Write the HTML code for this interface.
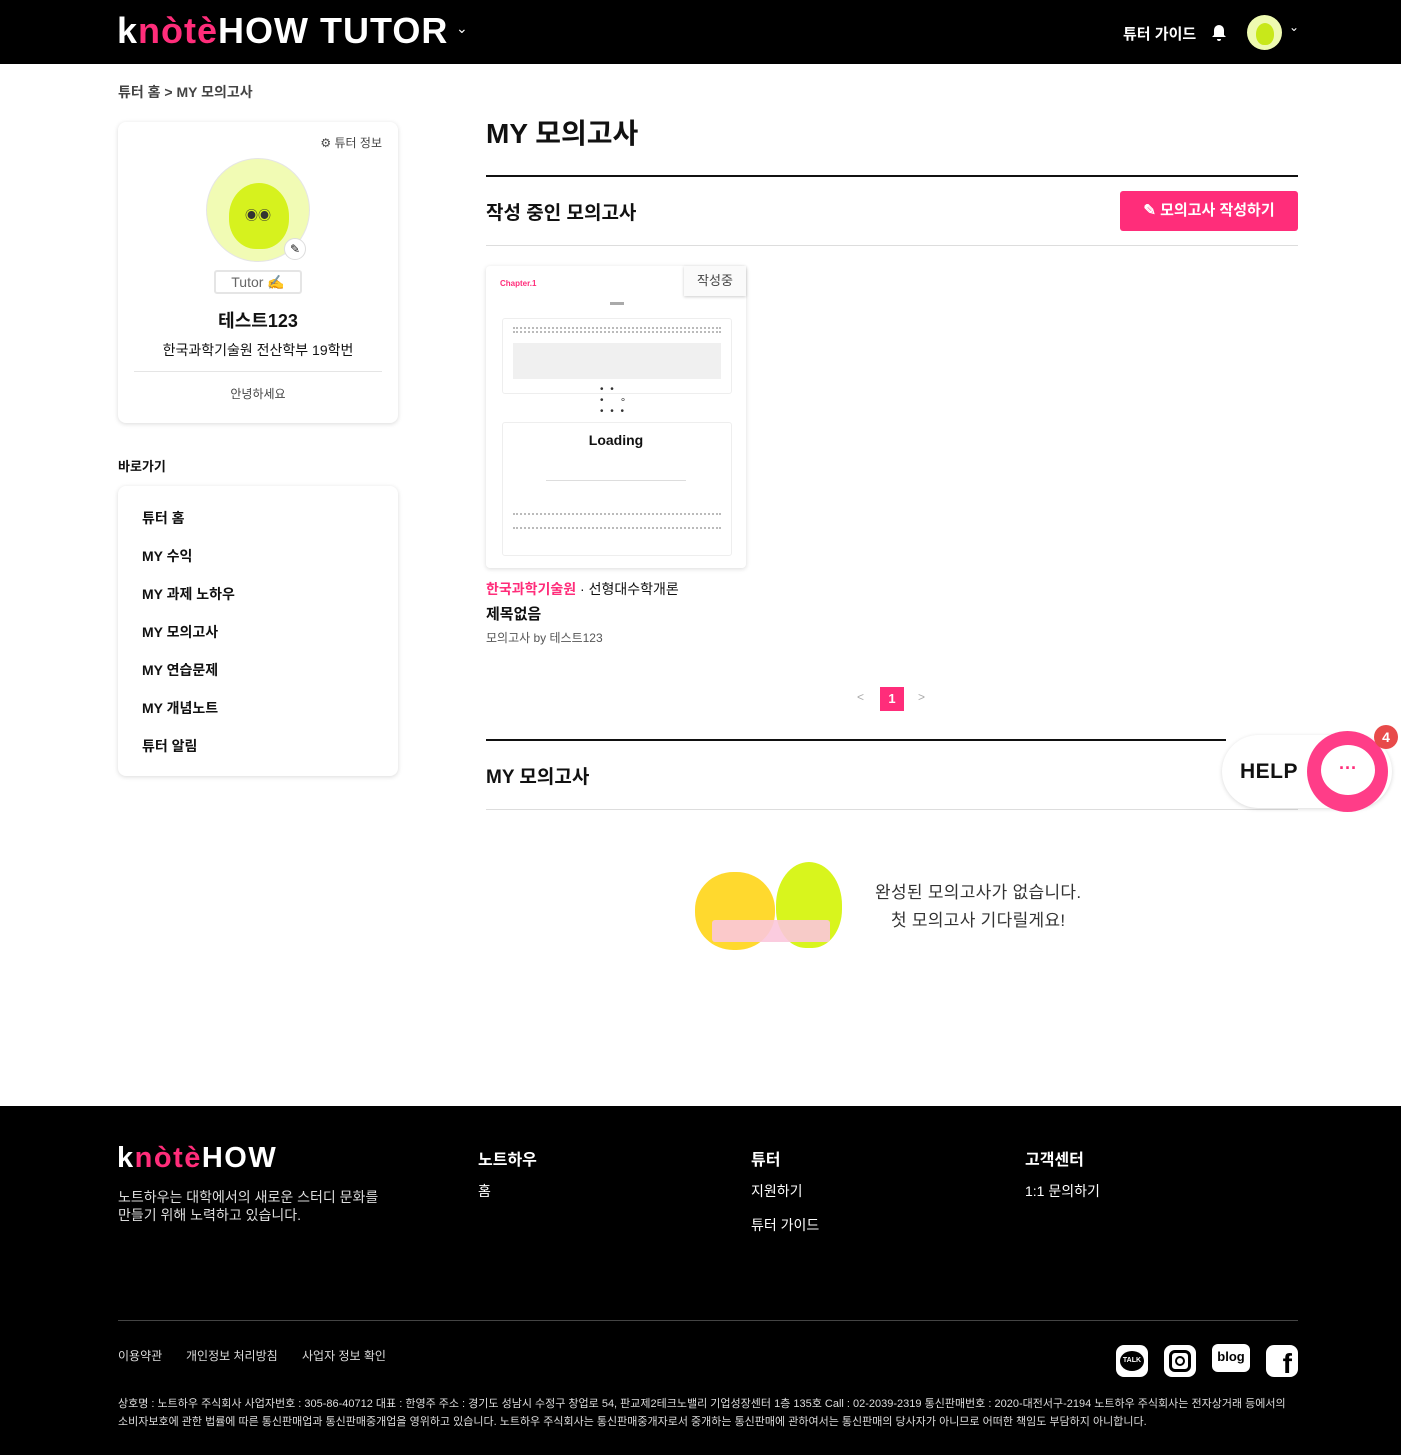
<!DOCTYPE html>
<html><head><meta charset="utf-8">
<style>
*{box-sizing:border-box;margin:0;padding:0}
body{width:1401px;height:1455px;background:#fff;font-family:"Liberation Sans","Noto Sans CJK KR",sans-serif;color:#111;position:relative;overflow:hidden}
.abs{position:absolute}
.hdr{position:absolute;left:0;top:0;width:1401px;height:64px;background:#000}
.logo{font-weight:bold;font-size:36px;letter-spacing:1px;color:#fff}
.pk{color:#ff2d7a}
.card{position:absolute;background:#fff;border-radius:8px;box-shadow:0 1px 5px rgba(0,0,0,.15)}
.b{font-weight:bold}
.nav div{position:absolute;left:24px;font-size:14px;font-weight:bold}
.foot{position:absolute;left:0;top:1106px;width:1401px;height:349px;background:#000;color:#fff}
</style></head><body>
<div class="hdr">
 <div class="abs logo" style="left:117px;top:10px">k<span class="pk">nòtè</span>HOW TUTOR</div>
 <div class="abs" style="left:456px;top:20px;color:#fff;font-size:14px">⌄</div>
 <div class="abs b" style="left:1123px;top:23px;color:#fff;font-size:15px">튜터 가이드</div>
 <svg class="abs" style="left:1209px;top:23px" width="20" height="20" viewBox="0 0 20 20"><path d="M10 2a5 5 0 0 0-5 5v5l-2 2h14l-2-2V7a5 5 0 0 0-5-5zM8 16a2 2 0 0 0 4 0z" fill="#fff"/></svg>
 <div class="abs" style="left:1247px;top:15px;width:35px;height:35px;border-radius:50%;background:#eefab0"><div style="margin:8px auto;width:18px;height:22px;border-radius:50% 50% 45% 45%;background:#c8e81a"></div></div>
 <div class="abs" style="left:1289px;top:20px;color:#fff;font-size:12px">⌄</div>
</div>
<div class="abs b" style="left:118px;top:82px;font-size:14px;color:#444">튜터 홈 &gt; MY 모의고사</div>

<div class="card" style="left:118px;top:122px;width:280px;height:301px">
 <div class="abs" style="right:16px;top:12px;font-size:12px;color:#444">⚙ 튜터 정보</div>
 <div class="abs" style="left:88px;top:36px;width:104px;height:104px;border-radius:50%;background:#f1fbb4;border:1px solid #e5e5e5">
  <div style="position:absolute;left:22px;top:24px;width:60px;height:66px;border-radius:50% 50% 45% 45%;background:#d6f21e"></div>
  <div style="position:absolute;left:38px;top:46px;font-size:13px;color:#333">◉◉</div>
 </div>
 <div class="abs" style="left:166px;top:116px;width:22px;height:22px;border-radius:50%;background:#fff;border:1px solid #ddd;font-size:12px;text-align:center;line-height:20px">✎</div>
 <div class="abs" style="left:96px;top:148px;width:88px;height:24px;border:2px solid #e5e5e5;border-radius:3px;text-align:center;font-size:14px;color:#666;line-height:20px">Tutor ✍</div>
 <div class="abs b" style="left:0;width:280px;top:185px;text-align:center;font-size:18px">테스트123</div>
 <div class="abs" style="left:0;width:280px;top:218px;text-align:center;font-size:14px">한국과학기술원 전산학부 19학번</div>
 <div class="abs" style="left:16px;width:248px;top:249px;border-top:1px solid #e5e5e5"></div>
 <div class="abs" style="left:0;width:280px;top:263px;text-align:center;font-size:12px;color:#444">안녕하세요</div>
</div>
<div class="abs b" style="left:118px;top:456px;font-size:13px">바로가기</div>
<div class="card nav" style="left:118px;top:486px;width:280px;height:290px">
 <div style="top:22px">튜터 홈</div><div style="top:60px">MY 수익</div><div style="top:98px">MY 과제 노하우</div><div style="top:136px">MY 모의고사</div><div style="top:174px">MY 연습문제</div><div style="top:212px">MY 개념노트</div><div style="top:250px">튜터 알림</div>
</div>

<div class="abs b" style="left:486px;top:112px;font-size:28px">MY 모의고사</div>
<div class="abs" style="left:486px;top:175px;width:812px;border-top:2px solid #111"></div>
<div class="abs b" style="left:486px;top:198px;font-size:19px">작성 중인 모의고사</div>
<div class="abs b" style="left:1120px;top:191px;width:178px;height:40px;background:#ff2d7a;border-radius:3px;color:#fff;font-size:15px;text-align:center;line-height:40px">✎ 모의고사 작성하기</div>
<div class="abs" style="left:486px;top:245px;width:812px;border-top:1px solid #ddd"></div>

<div class="card" style="left:486px;top:266px;width:260px;height:302px;border-radius:4px">
 <div class="abs b" style="left:14px;top:13px;font-size:8px;color:#ff2d7a">Chapter.1</div>
 <div class="abs" style="left:198px;top:0;width:62px;height:30px;background:#fafafa;box-shadow:0 1px 3px rgba(0,0,0,.2);font-size:13px;color:#444;text-align:center;line-height:30px">작성중</div>
 <div class="abs" style="left:124px;top:36px;width:14px;border-top:3px solid #aaa"></div>
 <div class="abs" style="left:16px;top:52px;width:230px;height:76px;border:1px solid #eee;border-radius:3px"><div style="margin:8px 10px 0;height:6px;border-top:2px dotted #bbb;border-bottom:2px dotted #bbb"></div><div style="margin:10px 10px 0;height:36px;background:#f0f0f0"></div></div>
 <div class="abs" style="left:16px;top:156px;width:230px;height:134px;border:1px solid #eee;border-radius:3px"><div style="margin:90px 10px 0;height:16px;border-top:2px dotted #bbb;border-bottom:2px dotted #bbb"></div></div>
 <div class="abs" style="left:60px;top:214px;width:140px;border-top:1px solid #ddd"></div>
 <div class="abs b" style="left:0;width:260px;top:166px;text-align:center;font-size:14px">Loading</div>
 <div class="abs" style="left:114px;top:118px;font-size:10px;color:#333;letter-spacing:2px">• •<br>• &nbsp;&nbsp;∘<br>• • •</div>
</div>
<div class="abs" style="left:486px;top:579px;font-size:14px"><span class="pk b">한국과학기술원</span> · 선형대수학개론</div>
<div class="abs b" style="left:486px;top:603px;font-size:15px">제목없음</div>
<div class="abs" style="left:486px;top:629px;font-size:12px;color:#555">모의고사 by 테스트123</div>
<div class="abs" style="left:857px;top:690px;color:#aaa;font-size:12px">&lt;</div>
<div class="abs b" style="left:880px;top:687px;width:24px;height:24px;background:#ff2d7a;color:#fff;text-align:center;line-height:24px;font-size:13px">1</div>
<div class="abs" style="left:918px;top:690px;color:#aaa;font-size:12px">&gt;</div>

<div class="abs" style="left:486px;top:739px;width:740px;border-top:2px solid #111"></div>
<div class="abs b" style="left:486px;top:762px;font-size:19px">MY 모의고사</div>
<div class="abs" style="left:486px;top:809px;width:812px;border-top:1px solid #ddd"></div>

<div class="abs" style="left:695px;top:872px;width:80px;height:78px;border-radius:48%;background:#ffd92e"></div>
<div class="abs" style="left:776px;top:862px;width:66px;height:86px;border-radius:50% 50% 45% 45%;background:#d8f51d"></div>
<div class="abs" style="left:712px;top:920px;width:118px;height:22px;background:#fbc7dc;border-radius:3px;opacity:.9"></div>
<div class="abs" style="left:875px;top:879px;font-size:17px;color:#333;text-align:center;line-height:28px;letter-spacing:.3px">완성된 모의고사가 없습니다.<br>첫 모의고사 기다릴게요!</div>

<div class="abs" style="left:1222px;top:735px;width:170px;height:73px;border-radius:37px;background:#fff;box-shadow:0 1px 4px rgba(0,0,0,.15)"></div>
<div class="abs b" style="left:1240px;top:760px;font-size:21px;letter-spacing:.5px">HELP</div>
<div class="abs" style="left:1307px;top:731px;width:81px;height:81px;border-radius:50%;background:#ff3d88"></div>
<div class="abs" style="left:1321px;top:745px;width:54px;height:50px;border-radius:50%;background:#fff;color:#ff2d7a;text-align:center;font-size:18px;line-height:46px;font-weight:bold">···</div>
<div class="abs b" style="left:1374px;top:725px;width:24px;height:24px;border-radius:50%;background:#e84a4a;color:#fff;font-size:14px;text-align:center;line-height:24px">4</div>

<div class="foot">
 <div class="abs logo" style="left:117px;top:36px;font-size:29px;letter-spacing:1.5px">k<span class="pk">nòtè</span>HOW</div>
 <div class="abs" style="left:118px;top:82px;font-size:14px;line-height:18px;color:#ddd">노트하우는 대학에서의 새로운 스터디 문화를<br>만들기 위해 노력하고 있습니다.</div>
 <div class="abs b" style="left:478px;top:40px;font-size:16px">노트하우</div>
 <div class="abs" style="left:478px;top:75px;font-size:14px">홈</div>
 <div class="abs b" style="left:751px;top:40px;font-size:16px">튜터</div>
 <div class="abs" style="left:751px;top:75px;font-size:14px">지원하기</div>
 <div class="abs" style="left:751px;top:109px;font-size:14px">튜터 가이드</div>
 <div class="abs b" style="left:1025px;top:40px;font-size:16px">고객센터</div>
 <div class="abs" style="left:1025px;top:75px;font-size:14px">1:1 문의하기</div>
 <div class="abs" style="left:118px;top:214px;width:1180px;border-top:1px solid #444"></div>
 <div class="abs" style="left:118px;top:241px;font-size:12px;color:#ddd">이용약관</div>
 <div class="abs" style="left:186px;top:241px;font-size:12px;color:#ddd">개인정보 처리방침</div>
 <div class="abs" style="left:302px;top:241px;font-size:12px;color:#ddd">사업자 정보 확인</div>
 <div class="abs" style="left:1116px;top:239px;width:32px;height:32px;border-radius:8px;background:#fff"><div style="margin:6px 4px;height:20px;border-radius:50%;background:#000;color:#fff;font-size:7px;font-weight:bold;text-align:center;line-height:20px">TALK</div></div>
 <div class="abs" style="left:1164px;top:239px;width:32px;height:32px;border-radius:8px;background:#fff"><div style="margin:5px;width:22px;height:22px;border:3px solid #000;border-radius:6px"><div style="margin:3px;width:10px;height:10px;border:2.5px solid #000;border-radius:50%"></div></div></div>
 <div class="abs b" style="left:1212px;top:238px;width:38px;height:28px;border-radius:6px;background:#fff;color:#000;font-size:13px;text-align:center;line-height:26px">blog</div>
 <div class="abs b" style="left:1266px;top:239px;width:32px;height:32px;border-radius:8px;background:#fff;color:#000;font-size:28px;text-align:right;padding-right:6px;line-height:38px;overflow:hidden">f</div>
 <div class="abs" style="left:118px;top:289px;font-size:11px;line-height:18px;color:#ddd;white-space:nowrap">상호명 : 노트하우 주식회사 사업자번호 : 305-86-40712 대표 : 한영주 주소 : 경기도 성남시 수정구 창업로 54, 판교제2테크노밸리 기업성장센터 1층 135호 Call : 02-2039-2319 통신판매번호 : 2020-대전서구-2194 노트하우 주식회사는 전자상거래 등에서의<br>소비자보호에 관한 법률에 따른 통신판매업과 통신판매중개업을 영위하고 있습니다. 노트하우 주식회사는 통신판매중개자로서 중개하는 통신판매에 관하여서는 통신판매의 당사자가 아니므로 어떠한 책임도 부담하지 아니합니다.</div>
</div>
</body></html>
